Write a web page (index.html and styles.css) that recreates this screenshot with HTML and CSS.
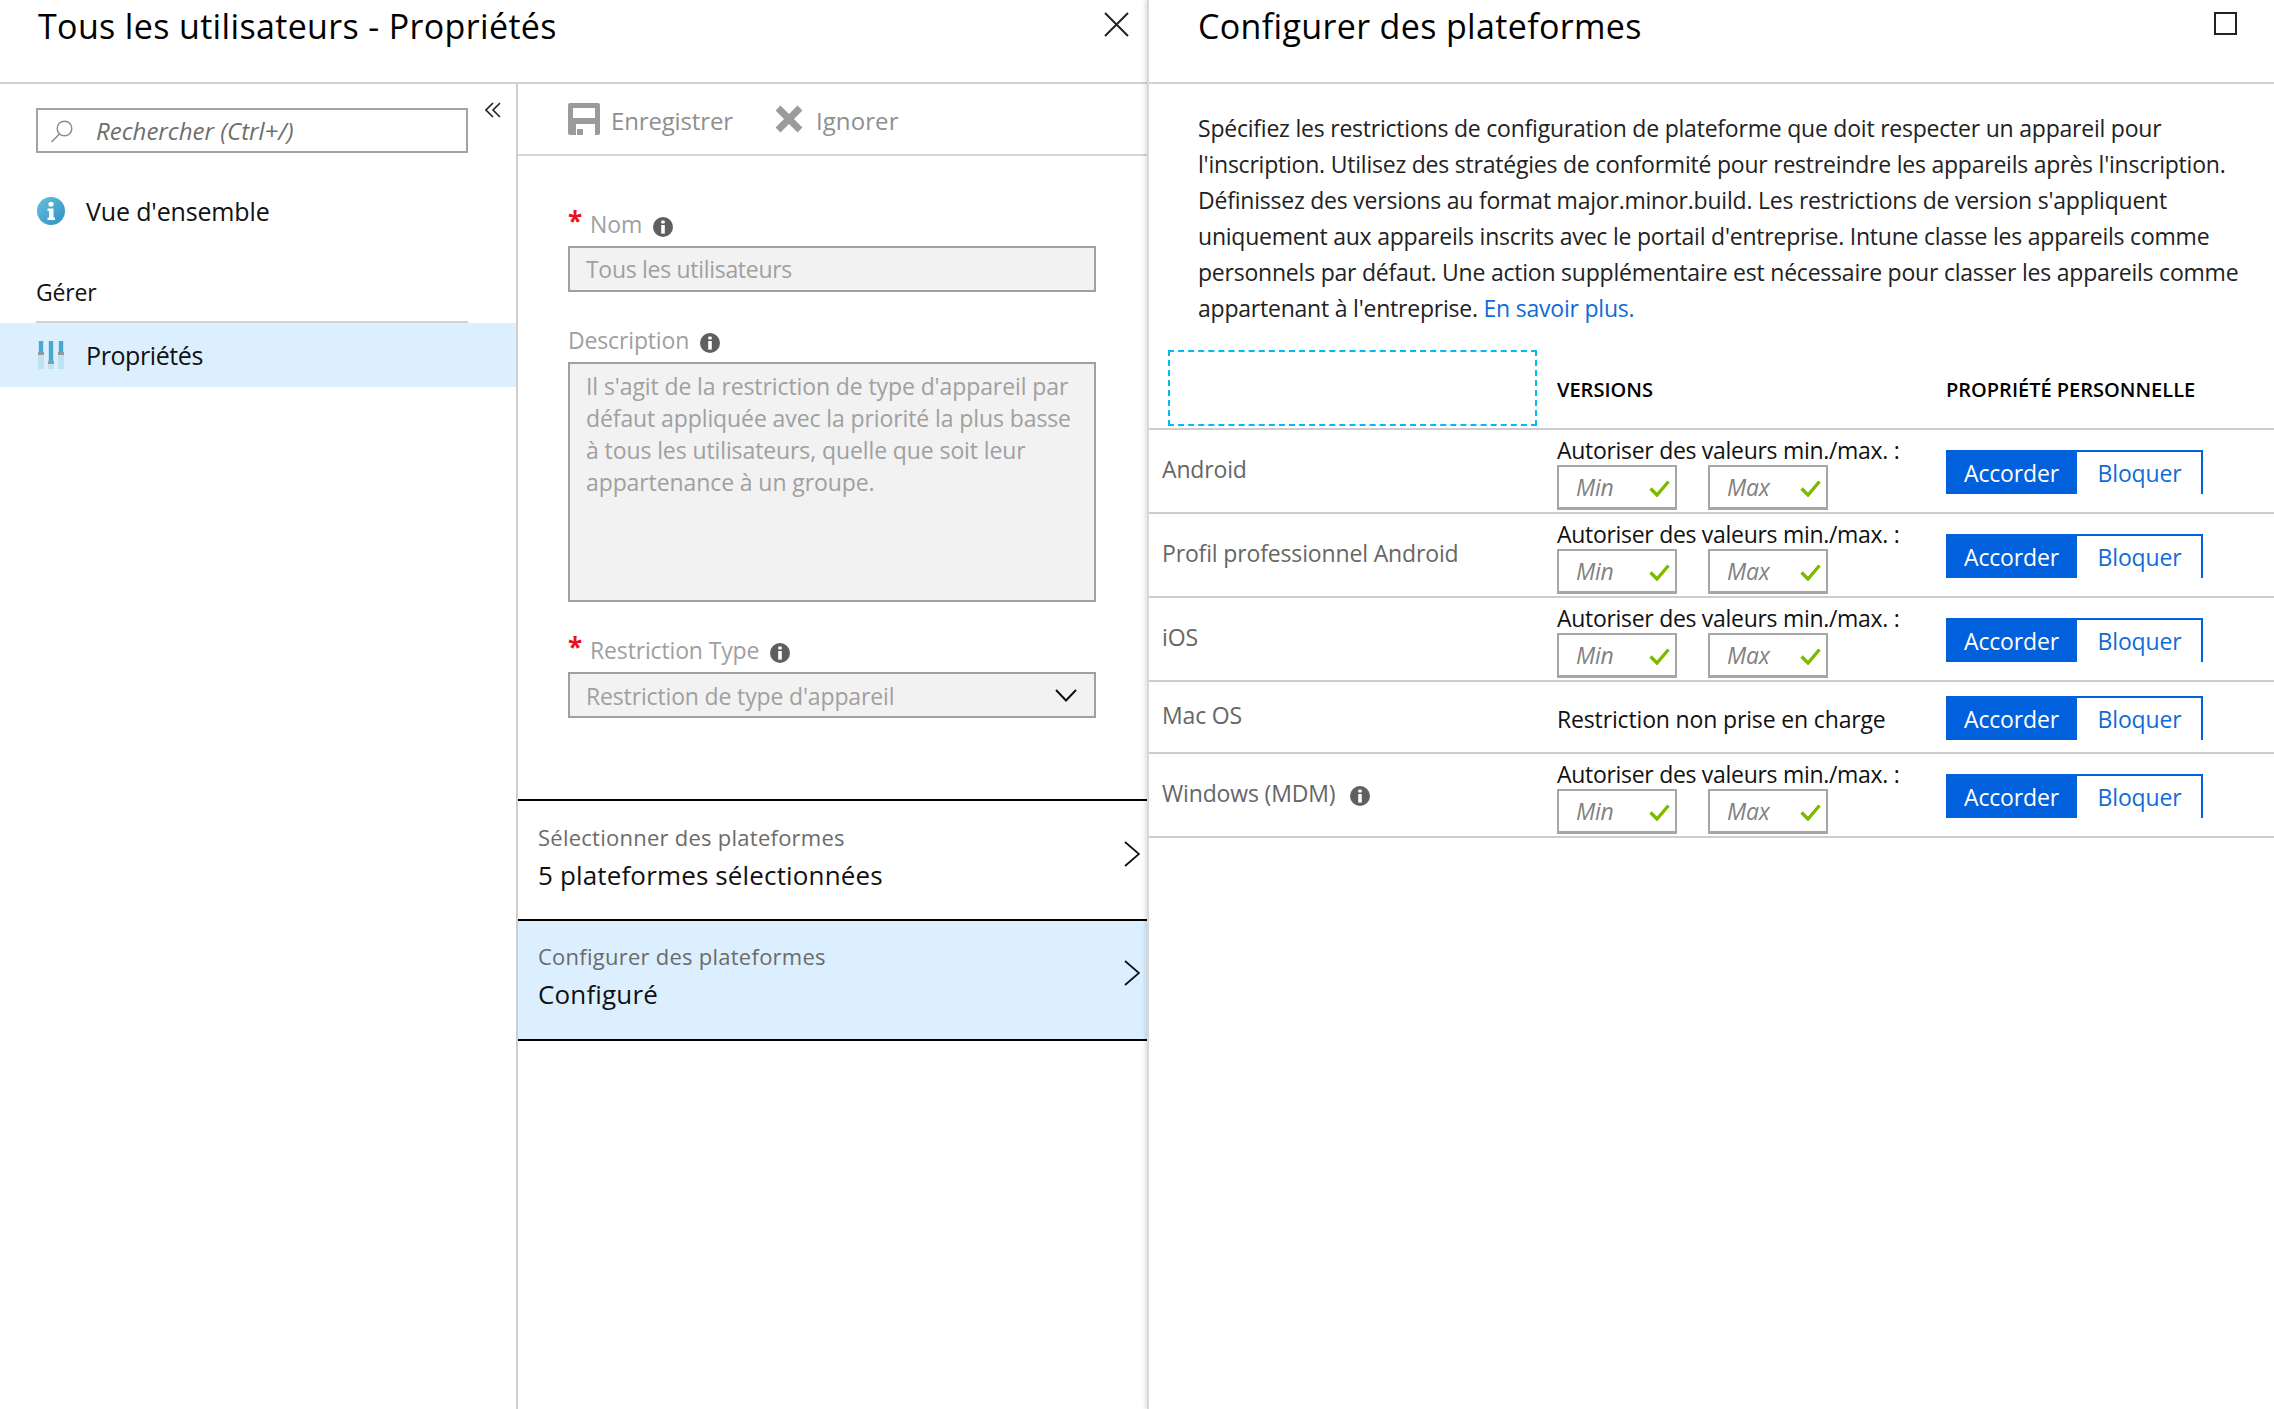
FILE: index.html
```html
<!DOCTYPE html>
<html lang="fr">
<head>
    <meta charset="UTF-8">
    <title>Tous les utilisateurs - Propriétés</title>
    <link rel="stylesheet" href="styles.css">
</head>
<body>
    <svg class="sprites" width="0" height="0">
        <symbol id="info" viewBox="0 0 20 20">
            <circle cx="10" cy="10" r="10" fill="#5f5f5f"/>
            <rect x="8.2" y="3.4" width="3.6" height="3.2" rx="1" fill="#fff"/>
            <rect x="8.2" y="8" width="3.6" height="8.6" fill="#fff"/>
        </symbol>
        <symbol id="check" viewBox="0 0 21 17">
            <path d="M1.5 8.5 L8 15 L19.5 1.5" fill="none" stroke="#7fba00" stroke-width="3.4"/>
        </symbol>
        <symbol id="chevron" viewBox="0 0 16 26">
            <path d="M1 1 L15 13 L1 25" fill="none" stroke="#111" stroke-width="1.8"/>
        </symbol>
    </svg>

    <div class="blade">
        <header class="blade-head">
            <h1>Tous les utilisateurs - Propriétés</h1>
            <svg class="close" width="25" height="25" viewBox="0 0 25 25"><path d="M1 1 L24 24 M24 1 L1 24" stroke="#222" stroke-width="2"/></svg>
        </header>
        <div class="blade-body">
            <nav class="menu">
                <div class="search-row">
                    <div class="search">
                        <svg width="24" height="24" viewBox="0 0 24 24"><circle cx="14.5" cy="9.5" r="7.3" fill="none" stroke="#8a8a8a" stroke-width="1.4"/><path d="M9.5 15 L1.5 23" stroke="#8a8a8a" stroke-width="1.4"/></svg>
                        <span>Rechercher (Ctrl+/)</span>
                    </div>
                    <svg class="collapse" width="16" height="16" viewBox="0 0 16 16"><path d="M8 1 L1 8 L8 15 M15 1 L8 8 L15 15" fill="none" stroke="#222" stroke-width="1.6"/></svg>
                </div>
                <a class="menu-item overview" href="#">
                    <svg width="28" height="28" viewBox="0 0 28 28">
                        <defs><linearGradient id="blue" x1="0" y1="0" x2="1" y2="1"><stop offset="0" stop-color="#68bfe0"/><stop offset="1" stop-color="#2f8fc2"/></linearGradient></defs>
                        <circle cx="14" cy="14" r="14" fill="url(#blue)"/>
                        <rect x="11.5" y="5" width="5" height="4.5" rx="1.5" fill="#fff"/>
                        <path d="M10.5 11.5 H16.5 V20.5 H18 V23 H10.5 V20.5 H12 V14 H10.5 Z" fill="#fff"/>
                    </svg>
                    Vue d'ensemble
                </a>
                <div class="menu-group">Gérer</div>
                <a class="menu-item active" href="#">
                    <svg width="26" height="28" viewBox="0 0 26 28">
                        <rect x="0" y="0" width="6" height="28" fill="#bfe2f0"/><rect x="10" y="0" width="6" height="28" fill="#bfe2f0"/><rect x="20" y="0" width="6" height="28" fill="#bfe2f0"/>
                        <rect x="1" y="0" width="4" height="11" fill="#4aa8d4"/><rect x="11" y="0" width="4" height="20" fill="#4aa8d4"/><rect x="21" y="0" width="4" height="11" fill="#4aa8d4"/>
                        <rect x="0" y="11" width="6" height="3" fill="#8f9ba1"/><rect x="10" y="20" width="6" height="3" fill="#8f9ba1"/><rect x="20" y="11" width="6" height="3" fill="#8f9ba1"/>
                    </svg>
                    Propriétés
                </a>
            </nav>
            <main class="props">
                <div class="toolbar">
                    <span class="tool">
                        <svg width="32" height="32" viewBox="0 0 32 32"><path fill-rule="evenodd" d="M2 0 H30 Q32 0 32 2 V30 Q32 32 30 32 H27 V21 H8 V32 H2 Q0 32 0 30 V2 Q0 0 2 0 Z M5 5 V15 H27 V5 Z" fill="#9b9b9b"/><rect x="9" y="26" width="6" height="6" fill="#9b9b9b"/></svg>
                        <span>Enregistrer</span>
                    </span>
                    <span class="tool ignore">
                        <svg width="28" height="28" viewBox="0 0 28 28"><path d="M3 3 L25 25 M25 3 L3 25" stroke="#9b9b9b" stroke-width="7"/></svg>
                        <span>Ignorer</span>
                    </span>
                </div>
                <form class="form">
                    <label class="field-label"><b>*</b>Nom <svg class="info"><use href="#info"/></svg></label>
                    <div class="field name">Tous les utilisateurs</div>
                    <label class="field-label gap">Description <svg class="info"><use href="#info"/></svg></label>
                    <div class="field area">Il s'agit de la restriction de type d'appareil par<br>défaut appliquée avec la priorité la plus basse<br>à tous les utilisateurs, quelle que soit leur<br>appartenance à un groupe.</div>
                    <label class="field-label gap"><b>*</b>Restriction Type <svg class="info"><use href="#info"/></svg></label>
                    <div class="field select"><span>Restriction de type d'appareil</span>
                        <svg width="22" height="13" viewBox="0 0 22 13"><path d="M1 1 L11 11.500 L21 1" fill="none" stroke="#111" stroke-width="2"/></svg>
                    </div>
                </form>
                <a class="step" href="#">
                    <span><small>Sélectionner des plateformes</small>5 plateformes sélectionnées</span>
                    <svg width="16" height="26"><use href="#chevron"/></svg>
                </a>
                <a class="step current" href="#">
                    <span><small>Configurer des plateformes</small>Configuré</span>
                    <svg width="16" height="26"><use href="#chevron"/></svg>
                </a>
            </main>
        </div>
    </div>

    <section class="blade config">
        <header class="blade-head">
            <h1>Configurer des plateformes</h1>
            <span class="maximize"></span>
        </header>
        <p class="intro">Spécifiez les restrictions de configuration de plateforme que doit respecter un appareil pour<br>l'inscription. Utilisez des stratégies de conformité pour restreindre les appareils après l'inscription.<br>Définissez des versions au format major.minor.build. Les restrictions de version s'appliquent<br>uniquement aux appareils inscrits avec le portail d'entreprise. Intune classe les appareils comme<br>personnels par défaut. Une action supplémentaire est nécessaire pour classer les appareils comme<br>appartenant à l'entreprise. <a href="#">En savoir plus.</a></p>
        <div class="platforms">
            <div class="row head">
                <div class="focus-box"></div>
                <div>VERSIONS</div>
                <div>PROPRIÉTÉ PERSONNELLE</div>
            </div>
            <div class="row">
                <div class="platform">Android</div>
                <div class="versions">
                    <div>Autoriser des valeurs min./max. :</div>
                    <div class="minmax">
                        <span class="mini">Min<svg width="21" height="17"><use href="#check"/></svg></span>
                        <span class="mini">Max<svg width="21" height="17"><use href="#check"/></svg></span>
                    </div>
                </div>
                <div class="toggle"><span class="on">Accorder</span><span class="off">Bloquer</span></div>
            </div>
            <div class="row">
                <div class="platform">Profil professionnel Android</div>
                <div class="versions">
                    <div>Autoriser des valeurs min./max. :</div>
                    <div class="minmax">
                        <span class="mini">Min<svg width="21" height="17"><use href="#check"/></svg></span>
                        <span class="mini">Max<svg width="21" height="17"><use href="#check"/></svg></span>
                    </div>
                </div>
                <div class="toggle"><span class="on">Accorder</span><span class="off">Bloquer</span></div>
            </div>
            <div class="row">
                <div class="platform">iOS</div>
                <div class="versions">
                    <div>Autoriser des valeurs min./max. :</div>
                    <div class="minmax">
                        <span class="mini">Min<svg width="21" height="17"><use href="#check"/></svg></span>
                        <span class="mini">Max<svg width="21" height="17"><use href="#check"/></svg></span>
                    </div>
                </div>
                <div class="toggle"><span class="on">Accorder</span><span class="off">Bloquer</span></div>
            </div>
            <div class="row short">
                <div class="platform">Mac OS</div>
                <div class="versions none">Restriction non prise en charge</div>
                <div class="toggle"><span class="on">Accorder</span><span class="off">Bloquer</span></div>
            </div>
            <div class="row">
                <div class="platform">Windows (MDM) <svg class="info"><use href="#info"/></svg></div>
                <div class="versions">
                    <div>Autoriser des valeurs min./max. :</div>
                    <div class="minmax">
                        <span class="mini">Min<svg width="21" height="17"><use href="#check"/></svg></span>
                        <span class="mini">Max<svg width="21" height="17"><use href="#check"/></svg></span>
                    </div>
                </div>
                <div class="toggle"><span class="on">Accorder</span><span class="off">Bloquer</span></div>
            </div>
        </div>
    </section>
</body>
</html>
```

FILE: styles.css
```css
* {
    box-sizing: border-box;
}
html, body {
    height: 100%;
}
body {
    margin: 0;
    display: flex;
    font-family: "Open Sans", sans-serif;
    font-size: 23px;
    letter-spacing: -0.15px;
    color: #111;
    background: #fff;
    overflow: hidden;
}
a {
    color: inherit;
    text-decoration: none;
}
.sprites {
    position: absolute;
}
.info {
    width: 20px;
    height: 20px;
    vertical-align: -4px;
    margin-left: 5px;
}

/* blades */
.blade {
    width: 1147px;
    flex: none;
    display: flex;
    flex-direction: column;
}
.blade-head {
    height: 84px;
    flex: none;
    border-bottom: 2px solid #d2d2d2;
    padding: 0 18px 0 38px;
    display: flex;
    justify-content: space-between;
    align-items: flex-start;
}
.blade-head h1 {
    margin: 0;
    font-size: 34px;
    font-weight: 400;
    line-height: 52px;
    letter-spacing: 0.35px;
    color: #000;
}
.close {
    margin-top: 12px;
}
.blade-body {
    flex: 1;
    display: flex;
}

/* left menu */
.menu {
    width: 518px;
    flex: none;
    border-right: 2px solid #cfcfcf;
}
.search-row {
    display: flex;
    padding: 24px 15px 0 36px;
    justify-content: space-between;
    align-items: flex-start;
}
.search {
    width: 432px;
    height: 45px;
    border: 2px solid #a3a3a3;
    display: flex;
    align-items: center;
    padding-left: 12px;
    gap: 22px;
    font-size: 24px;
    letter-spacing: 0;
    font-style: italic;
    color: #6e6e6e;
}
.collapse {
    margin-top: -6px;
}
.menu-item {
    display: flex;
    align-items: center;
    height: 64px;
    padding-left: 37px;
    gap: 21px;
    font-size: 25px;
    letter-spacing: -0.15px;
    color: #111;
}
.overview {
    margin-top: 26px;
}
.menu-group {
    margin: 34px 48px 0 36px;
    height: 46px;
    border-bottom: 2px solid #d2d2d2;
    font-size: 23px;
    line-height: 30px;
    color: #111;
}
.menu-item.active {
    background: #dcefff;
    padding-left: 38px;
    gap: 22px;
    letter-spacing: -0.4px;
}

/* middle panel */
.props {
    flex: 1;
    display: flex;
    flex-direction: column;
}
.toolbar {
    height: 72px;
    flex: none;
    border-bottom: 2px solid #d6d6d6;
    padding: 18px 0 0 50px;
    display: flex;
    color: #8f8f8f;
}
.tool {
    display: flex;
    align-items: center;
    height: 34px;
    gap: 11px;
    font-size: 24px;
}
.tool span {
    padding-top: 2px;
}
.ignore {
    margin-left: 42px;
    gap: 13px;
    letter-spacing: 0.1px;
}
.form {
    height: 643px;
    flex: none;
    padding: 52px 50px 0 50px;
    color: #a0a0a0;
}
.form b {
    color: #e81123;
    font-weight: 700;
    font-size: 26px;
    margin-right: 8px;
    vertical-align: 2px;
    line-height: 1;
}
.field-label {
    display: block;
    height: 38px;
    line-height: 32px;
}
.gap {
    margin-top: 32px;
}
.field {
    width: 528px;
    border: 2px solid #a0a0a0;
    background: #f2f2f2;
    padding: 0 16px;
    line-height: 42px;
    color: #a0a0a0;
}
.name {
    height: 46px;
    letter-spacing: -0.3px;
}
.area {
    height: 240px;
    line-height: 32px;
    padding-top: 6px;
    letter-spacing: -0.1px;
    white-space: nowrap;
}
.select {
    height: 46px;
    display: flex;
    justify-content: space-between;
    align-items: center;
    padding-right: 17px;
}
.select span {
    padding-top: 2px;
}
.step {
    height: 120px;
    flex: none;
    border-top: 2px solid #000;
    padding: 0 7px 8px 20px;
    display: flex;
    justify-content: space-between;
    align-items: center;
    font-size: 26px;
    letter-spacing: 0.15px;
    color: #111;
}
.step small {
    display: block;
    font-size: 22px;
    line-height: 38px;
    letter-spacing: 0.25px;
    color: #6b6b6b;
}
.step span {
    line-height: 38px;
}
.step svg {
    margin-bottom: 4px;
}
.current {
    background: #dcefff;
    border-bottom: 2px solid #000;
    height: 122px;
    padding-bottom: 10px;
}

/* right panel */
.config {
    flex: 1;
    width: auto;
    border-left: 2px solid #d8d8d8;
    box-shadow: -2px 0 4px rgba(0, 0, 0, 0.12);
}
.config .blade-head {
    padding: 0 37px 0 49px;
}
.maximize {
    width: 23px;
    height: 23px;
    border: 2px solid #222;
    margin-top: 12px;
}
.intro {
    margin: 0;
    padding: 26px 0 0 49px;
    line-height: 36px;
    letter-spacing: -0.22px;
    color: #222;
    height: 264px;
}
.intro a {
    color: #0f6cd5;
}
.row {
    display: grid;
    grid-template-columns: 395px 389px 1fr;
    height: 84px;
    border-bottom: 2px solid #cdcdcd;
    padding-left: 13px;
    align-items: center;
}
.row.head {
    height: 82px;
    font-size: 20px;
    font-weight: 600;
    color: #000;
    letter-spacing: 0;
}
.focus-box {
    width: 369px;
    height: 76px;
    margin-left: 6px;
    border: 2px dashed #00bcf2;
}
.head > div:not(.focus-box) {
    padding-top: 2px;
}
.row.short {
    height: 72px;
}
.platform {
    color: #666;
    margin-top: -4px;
}
.platform .info {
    margin-left: 9px;
}
.versions {
    align-self: start;
    padding-top: 6px;
    line-height: 29px;
    letter-spacing: -0.3px;
    color: #111;
}
.versions.none {
    align-self: center;
    padding-top: 4px;
    letter-spacing: -0.15px;
}
.minmax {
    display: flex;
    gap: 31px;
}
.mini {
    width: 120px;
    height: 45px;
    border: 2px solid #a6a6a6;
    border-bottom-width: 3px;
    font-style: italic;
    color: #828282;
    padding: 0 5px 0 17px;
    display: flex;
    justify-content: space-between;
    align-items: center;
}
.mini svg {
    margin-top: 3px;
}
.toggle {
    display: flex;
    height: 44px;
    width: 257px;
    margin-top: 1px;
}
.on, .off {
    text-align: center;
}
.on {
    width: 131px;
    background: #0160dc;
    color: #fff;
    line-height: 46px;
}
.off {
    width: 126px;
    color: #0f6cd5;
    border-top: 2px solid #0160dc;
    border-right: 2px solid #0160dc;
    line-height: 42px;
    padding-left: 1px;
}
```
